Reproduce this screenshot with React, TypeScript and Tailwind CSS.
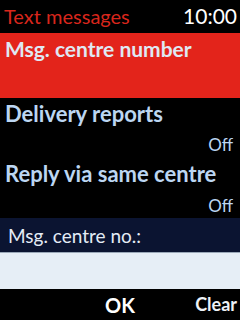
export default function App() {
  return (
    <div
      className="w-[240px] h-[320px] bg-black flex flex-col overflow-hidden"
      style={{ fontFamily: 'Lato, "DejaVu Sans", sans-serif' }}
    >
      {/* status bar */}
      <div className="h-[33px] flex items-center justify-between pl-[4px] pr-[3px] text-[20px] leading-none pb-[2px]">
        <span className="text-[#d9261c]">Text messages</span>
        <span className="text-white text-[21px]">10:00</span>
      </div>

      {/* selected row */}
      <div className="h-[65px] bg-[#e3241b] px-[5px] pt-[3px]">
        <div className="text-[#dfe9f4] font-bold text-[21px] leading-[26px]">Msg. centre number</div>
      </div>

      <div className="px-[5px] pt-[3px]">
        <div className="text-[#bcd6f2] font-bold text-[22px] leading-[26px]">Delivery reports</div>
        <div className="text-[#bcd6f2] text-[17px] leading-[20px] text-right pr-[2px] mt-[8px]">Off</div>
        <div className="text-[#bcd6f2] font-bold text-[22px] leading-[26px] mt-[6px]">Reply via same centre</div>
        <div className="text-[#bcd6f2] text-[17px] leading-[20px] text-right pr-[2px] mt-[9px]">Off</div>
      </div>

      {/* dialog */}
      <div className="mt-auto">
        <div className="h-[34px] bg-[#0b1431] flex items-center px-[8px] pt-[2px] text-[#e4ecf6] text-[19px]">
          Msg. centre no.:
        </div>
        <div className="h-[37px] bg-[#e6eef6] border-t border-[#9aa8b8]"></div>
        <div className="h-[31px] relative flex items-center justify-center text-white font-bold">
          <span className="text-[20px]">OK</span>
          <span className="absolute right-[3px] text-[18px] font-bold text-[#eef2f6]">Clear</span>
        </div>
      </div>
    </div>
  );
}
